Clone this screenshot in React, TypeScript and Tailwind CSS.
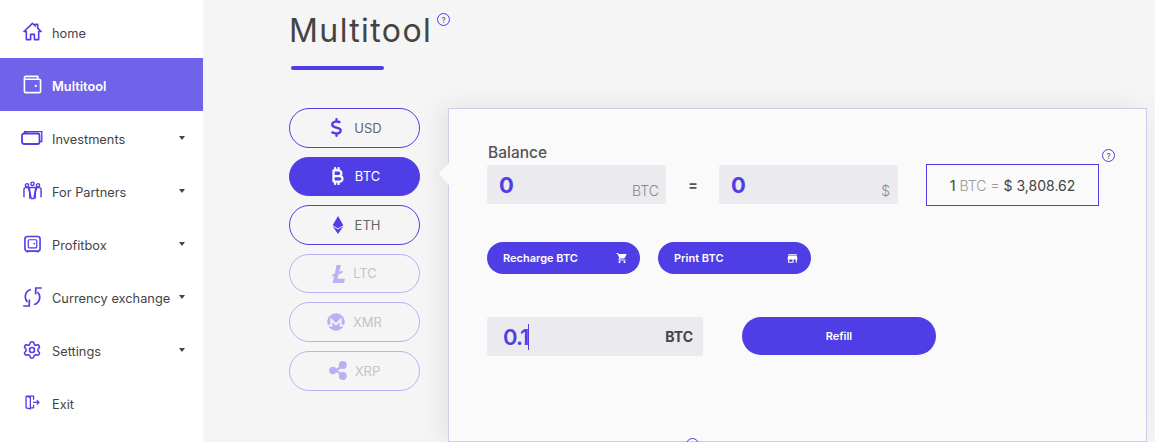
import { FaEthereum, FaMonero } from 'react-icons/fa';
import { FaBitcoinSign, FaDollarSign } from 'react-icons/fa6';
import { MdShoppingCart, MdStore } from 'react-icons/md';
import { Settings as SettingsIcon } from 'lucide-react';

const font = "font-['Inter','Noto_Sans',sans-serif]";

const HomeIcon = () => (
  <svg width="19" height="19" viewBox="0 0 20 20" fill="none" stroke="#4f3de6" strokeWidth="1.7">
    <path d="M1 10 L10 1.5 L13 4.2 V2.5 H15.5 V6.5 L19 10 H16.5 V18.5 H12 V13 H8 V18.5 H3.5 V10 Z" strokeLinejoin="round" />
  </svg>
);

const WalletIcon = () => (
  <svg width="19" height="19" viewBox="0 0 20 20" fill="none" stroke="#fff" strokeWidth="1.7">
    <path d="M3 1.5 H15.5 V4.5 M1.5 3 A1.5 1.5 0 0 1 3 1.5 M1.5 3 V17 A1.5 1.5 0 0 0 3 18.5 H17 A1.5 1.5 0 0 0 18.5 17 V6 A1.5 1.5 0 0 0 17 4.5 H2.5" />
    <circle cx="13.5" cy="11.5" r="1.2" fill="#fff" stroke="none" />
  </svg>
);

const MoneyIcon = () => (
  <svg width="22" height="15" viewBox="0 0 22 15" fill="none" stroke="#4f3de6" strokeWidth="1.3">
    <rect x="1" y="3.5" width="17.5" height="10.5" rx="2" strokeWidth="1.8" />
    <path d="M3.5 3.5 V1.7 H20.8 V11.5 H18.5" />
    <path d="M4 3 L6 1.7" />
  </svg>
);

const PartnersIcon = () => (
  <svg width="19" height="19" viewBox="0 0 20 20" fill="none" stroke="#4f3de6" strokeWidth="1.5">
    <circle cx="4.2" cy="4.5" r="1.7" />
    <circle cx="10" cy="3" r="1.8" />
    <circle cx="15.8" cy="4.5" r="1.7" />
    <path d="M1 17 V9 Q1 7 3 7 H5.5 L7 12 V18.5 M19 17 V9 Q19 7 17 7 H14.5 L13 12 V18.5" />
    <path d="M6.5 6.8 H13.5 L11.5 18.5 H8.5 Z" strokeLinejoin="round" />
  </svg>
);

const SafeIcon = () => (
  <svg width="17" height="18" viewBox="0 0 18 18" fill="none" stroke="#4f3de6" strokeWidth="1.7">
    <rect x="1" y="1" width="16" height="15.5" rx="2.5" />
    <rect x="4.5" y="4.5" width="9" height="8.5" rx="1" strokeWidth="1.3" />
    <circle cx="10.8" cy="8.6" r="0.9" fill="#4f3de6" stroke="none" />
    <path d="M3.5 16.5 V18 M14.5 16.5 V18" />
  </svg>
);

const ExchangeIcon = () => (
  <svg width="19" height="20" viewBox="0 0 19 20" fill="none" stroke="#4f3de6" strokeWidth="1.7">
    <path d="M8 2.5 C3 3.5 0 10 4.5 15" />
    <path d="M0.2 19 H6.2 L6.4 12.5" />
    <path d="M11 17.5 C16 16.5 19 10 14.5 5" />
    <path d="M18.8 1 H12.8 L12.6 7.5" />
  </svg>
);

const ExitIcon = () => (
  <svg width="15" height="15" viewBox="0 0 14 14" fill="none" stroke="#4f3de6" strokeWidth="1.2">
    <path d="M1 1 H8 V4.5 M8 9 V12 H5 M1 1 V12 L5 13 V2.2 L1 1" strokeLinejoin="round" />
    <path d="M7.5 6.8 H13 M11 4.8 L13 6.8 L11 8.8" />
  </svg>
);

const LtcIcon = () => (
  <svg width="13" height="18" viewBox="0 0 13 18" fill="#b9b1f3">
    <path d="M4.5 0 H9 L7.2 6.8 L10.8 5.4 L10.1 7.9 L6.5 9.3 L5.4 13.7 H13 L12 18 H0.6 L2.2 11 L0 11.8 L0.6 9.4 L2.9 8.5 Z" />
  </svg>
);

const XrpIcon = () => (
  <svg width="18" height="19" viewBox="0 0 18 19" fill="#b9b1f3" stroke="#b9b1f3">
    <circle cx="3.8" cy="9.5" r="3.7" stroke="none" />
    <circle cx="13.8" cy="4" r="4" stroke="none" />
    <circle cx="13.8" cy="15" r="4" stroke="none" />
    <path d="M3.8 9.5 Q9 9.5 13.8 4 M3.8 9.5 Q9 9.5 13.8 15" fill="none" strokeWidth="2.2" />
  </svg>
);

const Help = ({ className }: { className: string }) => (
  <span className={`flex h-[13px] w-[13px] items-center justify-center rounded-full border border-[#4f3de6] text-[8px] leading-none text-[#555] ${className}`}>
    ?
  </span>
);

const Caret = () => <span className="ml-auto mr-[18px] h-0 w-0 border-x-[3px] border-t-[4px] border-x-transparent border-t-[#444]" />;

const menu = [
  { label: 'home', icon: <HomeIcon /> },
  { label: 'Multitool', icon: <WalletIcon />, active: true },
  { label: 'Investments', icon: <MoneyIcon />, caret: true },
  { label: 'For Partners', icon: <PartnersIcon />, caret: true },
  { label: 'Profitbox', icon: <SafeIcon />, caret: true },
  { label: 'Currency exchange', icon: <ExchangeIcon />, caret: true },
  { label: 'Settings', icon: <SettingsIcon size={20} color="#4f3de6" strokeWidth={1.9} />, caret: true },
  { label: 'Exit', icon: <ExitIcon /> },
];

const tabs = [
  { label: 'USD', icon: <FaDollarSign size={19} color="#4f3de6" /> },
  { label: 'BTC', icon: <FaBitcoinSign size={18} color="#fff" />, active: true },
  { label: 'ETH', icon: <FaEthereum size={18} color="#4f3de6" /> },
  { label: 'LTC', icon: <LtcIcon />, muted: true },
  { label: 'XMR', icon: <FaMonero size={18} color="#b9b1f3" />, muted: true },
  { label: 'XRP', icon: <XrpIcon />, muted: true },
];

const Sidebar = () => (
  <aside className="h-full w-[203px] shrink-0 bg-white pt-[5px]">
    {menu.map((item) => (
      <div
        key={item.label}
        className={`flex h-[53px] items-center text-[12.8px] ${item.active ? 'bg-[#7063e9] font-semibold text-white' : 'text-[#444]'}`}
      >
        <span className="flex w-[52px] shrink-0 justify-center pl-[12px]">{item.icon}</span>
        <span className="whitespace-nowrap pt-[4px]">{item.label}</span>
        {item.caret && <Caret />}
      </div>
    ))}
  </aside>
);

const Tabs = () => (
  <div className="flex w-[131px] shrink-0 flex-col gap-[9px]">
    {tabs.map((tab) => (
      <div
        key={tab.label}
        className={`flex h-[39.6px] items-center justify-center gap-[8px] rounded-full border text-[13px] ${
          tab.active
            ? 'border-[#4f3de6] bg-[#4f3de6] text-white'
            : tab.muted
              ? 'border-[#b9b1f3] text-[#c4c4c4]'
              : 'border-[#4f3de6] text-[#666]'
        }`}
      >
        {tab.icon}
        <span className="pt-[1px]">{tab.label}</span>
      </div>
    ))}
  </div>
);

const Panel = () => (
  <section className="relative ml-[28px] w-[699px] border border-[#d0cceb] bg-[#fafafa] pl-[38px] pt-[33px] shadow-[-6px_0_24px_rgba(0,0,0,0.08)]">
    <span className="absolute left-[-9px] top-[57px] h-[16px] w-[16px] rotate-45 border-b border-l border-[#e6e4f3] bg-[#fafafa]" />
    <Help className="absolute left-[653px] top-[40px]" />
    <div className="pl-[1px] pt-[1px] text-[15.5px] font-medium leading-[19px] text-[#555]">Balance</div>
    <div className="flex items-start">
      <div className="relative mt-[3px] flex h-[39px] w-[179px] rounded-[3px] bg-[#ebeaef] pl-[12px] pt-[5px] text-[22px] font-bold leading-[30px] text-[#4f3de6]">
        0
        <span className="absolute bottom-[3px] right-[7px] text-[14px] font-light leading-[20px] text-[#888]">BTC</span>
      </div>
      <div className="mt-[3px] flex h-[39px] w-[53px] items-center justify-center pl-[1px] text-[14px] font-bold text-[#555]">=</div>
      <div className="relative mt-[3px] flex h-[39px] w-[179px] rounded-[3px] bg-[#ebeaef] pl-[12px] pt-[5px] text-[22px] font-bold leading-[30px] text-[#4f3de6]">
        0
        <span className="absolute bottom-[3px] right-[8px] text-[14px] font-light leading-[20px] text-[#888]">$</span>
      </div>
      <div className="ml-[28px] mt-[2px] flex h-[42px] w-[173px] items-center justify-center gap-[4px] border border-[#4f3de6] text-[14px] text-[#555]">
        <span className="font-medium">1</span>
        <span className="font-light text-[#999]">BTC =</span>
        <span className="text-[#444]">$ 3,808.62</span>
      </div>
    </div>
    <div className="mt-[36px] flex gap-[18px]">
      <button className="flex h-[32px] w-[153px] items-center justify-between rounded-full bg-[#4f3de6] pl-[16px] pr-[12px] text-[11px] font-semibold text-white">
        Recharge BTC <MdShoppingCart size={12} />
      </button>
      <button className="flex h-[32px] w-[153px] items-center justify-between rounded-full bg-[#4f3de6] pl-[16px] pr-[12px] text-[11px] font-semibold text-white">
        Print BTC <MdStore size={13} />
      </button>
    </div>
    <div className="mt-[43px] flex gap-[39px]">
      <div className="flex h-[39px] w-[216px] items-center rounded-[3px] bg-[#ebeaef] pl-[16px] pr-[10px]">
        <span className="border-r border-[#4f3de6] text-[22px] font-semibold leading-[26px] tracking-[-1px] text-[#4f3de6]">0.1</span>
        <span className="ml-auto text-[14px] font-bold text-[#444]">BTC</span>
      </div>
      <button className="h-[38px] w-[194px] rounded-full bg-[#4f3de6] text-[11px] font-semibold text-white">Refill</button>
    </div>
    <Help className="absolute left-[237px] top-[329px]" />
  </section>
);

export default function App() {
  return (
    <div className={`flex h-[442px] w-[1155px] overflow-hidden bg-[#f5f5f5] ${font}`}>
      <Sidebar />
      <main className="min-w-0 flex-1 pl-[86px]">
        <div className="relative h-[108px]">
          <h1 className="pt-[9px] text-[32px] font-normal leading-[44px] tracking-[1.4px] text-[#444]">Multitool</h1>
          <Help className="absolute left-[148px] top-[13px]" />
          <div className="ml-[2px] mt-[13px] h-[4px] w-[93px] rounded-full bg-[#4f3de6]" />
        </div>
        <div className="flex h-[334px]">
          <Tabs />
          <Panel />
        </div>
      </main>
    </div>
  );
}
